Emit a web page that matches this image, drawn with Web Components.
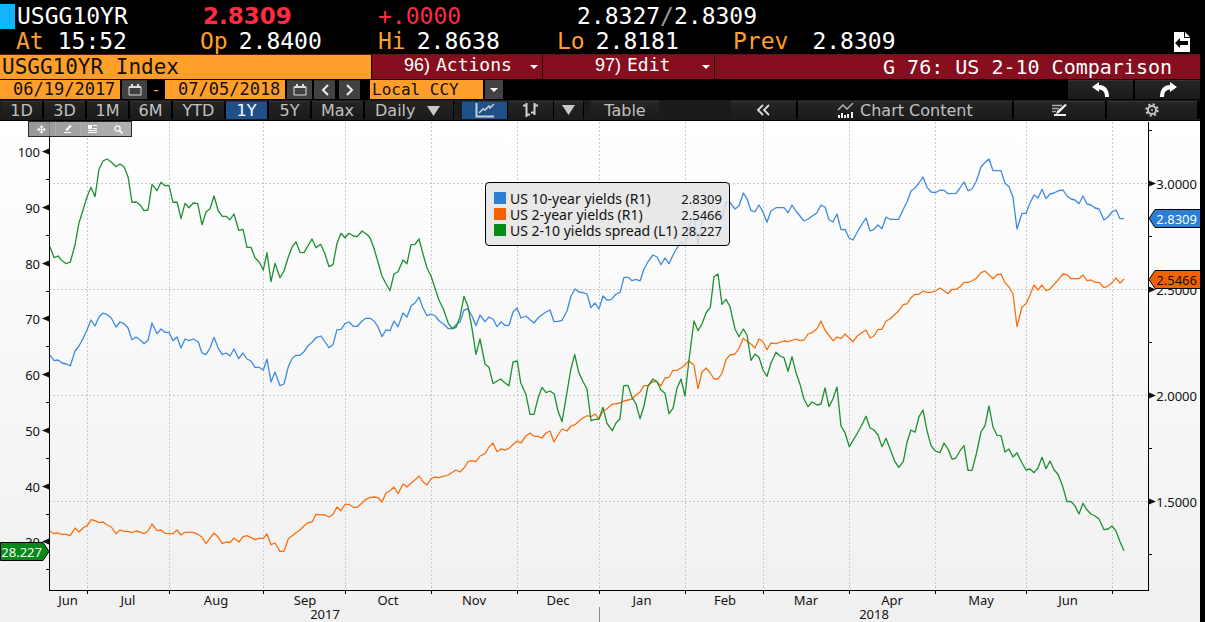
<!DOCTYPE html>
<html lang="en">
<head>
<meta charset="utf-8">
<title>USGG10YR Index - G 76: US 2-10 Comparison</title>
<style>
  body { margin: 0; background: #000; }
</style>
</head>
<body>
<terminal-page></terminal-page>

<script>
function define(name, html, setup) {
  const template = document.createElement('template');
  template.innerHTML = '<style>*{box-sizing:border-box}</style>' + html;
  customElements.define(name, class extends HTMLElement {
    constructor() {
      super();
      this.attachShadow({ mode: 'open' }).append(template.content.cloneNode(true));
    }
    connectedCallback() { if (setup) setup(this, this.shadowRoot); }
  });
}

/* ---------- icons ---------- */
const ICONS = {
  page: [16, 20, '<path d="M0 0H10V6H16V20H0Z" fill="#fff"/><path d="M11 0L16 5H11Z" fill="#fff"/><path d="M1 11L6 6V9H14V13H6V16Z" fill="#000"/>'],
  calendar: [14, 12, '<path d="M1 3H13V11H1Z" fill="none" stroke="#ddd"/><path d="M1 2H13V4H1Z" fill="#ddd"/><path d="M3 0H5V3H3ZM9 0H11V3H9Z" fill="#ddd"/>'],
  left: [8, 12, '<path d="M7 1L2 6L7 11" fill="none" stroke="#eee" stroke-width="2"/>'],
  right: [8, 12, '<path d="M1 1L6 6L1 11" fill="none" stroke="#eee" stroke-width="2"/>'],
  down: [8, 4, '<path d="M0 0H8L4 4Z" fill="#fff"/>'],
  bigdown: [13, 10, '<path d="M0 0H13L6.500 10Z" fill="#c8c8c8"/>'],
  undo: [18, 15, '<path d="M0 5L7 0V3C13 3 17 7 17 15H13C13 10 11 8 7 7.500V10Z" fill="#fff"/>'],
  redo: [18, 15, '<path d="M18 5L11 0V3C5 3 1 7 1 15H5C5 10 7 8 11 7.500V10Z" fill="#fff"/>'],
  line: [20, 15, '<path d="M1.500 0V13.500H19" fill="none" stroke="#c8d0dc" stroke-width="2"/><path d="M4 10L8 6L10 7L14 3L15 5L19 1" fill="none" stroke="#c8d0dc" stroke-width="1.500"/>'],
  bars: [17, 14, '<path d="M4.500 0V14M1 2.500H4M5 11.500H8M12.500 0V12M9 9.500H12M13 2.500H16" fill="none" stroke="#d4d4d4" stroke-width="2"/>'],
  collapse: [14, 12, '<path d="M7 1L2 6L7 11M13 1L8 6L13 11" fill="none" stroke="#ddd" stroke-width="1.800"/>'],
  content: [17, 15, '<path d="M1 7L6 2L10 6L16 0" fill="none" stroke="#bbb" stroke-width="1.300"/><path d="M1 12H3V15H1ZM4 10H6V15H4ZM7 12H9V15H7ZM10 11H12V15H10ZM14 9H16V15H14Z" fill="#eee"/>'],
  edit: [16, 12, '<path d="M1 1.500H11M1 4.500H8M1 7.500H5" stroke="#aaa" stroke-width="1.500"/><path d="M14 0L16 1L8 9L5 10L6 7Z" fill="#eee"/><path d="M3 11H15" stroke="#eee" stroke-width="2"/>'],
  gear: [14, 14, '<circle cx="7" cy="7" r="4" fill="none" stroke="#c4c4c4" stroke-width="2"/><circle cx="7" cy="7" r="5.700" fill="none" stroke="#c4c4c4" stroke-width="2" stroke-dasharray="2.200 2.270"/><circle cx="7" cy="7" r="1" fill="#c4c4c4"/>'],
  move: [9, 9, '<path d="M4.500 0L6.500 2.500H2.500ZM4.500 9L6.500 6.500H2.500ZM0 4.500L2.500 2.500V6.500ZM9 4.500L6.500 2.500V6.500Z" fill="#fff"/><path d="M4.500 1V8M1 4.500H8" stroke="#fff"/>'],
  pencil: [9, 8, '<path d="M8 0.500L3 5.500" stroke="#fff" stroke-width="2"/><path d="M1 7.500H8" stroke="#fff"/>'],
  note: [9, 8, '<path d="M0 0H4V4H0Z" fill="#fff"/><path d="M5 0.500H9M5 3.500H9M0 5.500H9M0 7.500H9" stroke="#fff"/>'],
  search: [9, 9, '<circle cx="3.500" cy="3.500" r="2.700" fill="none" stroke="#fff" stroke-width="1.300"/><path d="M5.500 5.500L8.500 8.500" stroke="#fff" stroke-width="1.700"/>']
};

define('ui-icon', '<style>:host{display:inline-flex;flex:none}svg{display:block}</style><svg aria-hidden="true"></svg>', (el, root) => {
  const [w, h, body] = ICONS[el.getAttribute('name')];
  const svg = root.querySelector('svg');
  svg.setAttribute('viewBox', `0 0 ${w} ${h}`);
  svg.setAttribute('width', w);
  svg.setAttribute('height', h);
  svg.innerHTML = body;
});

/* ---------- quote header ---------- */
define('quote-header', `
<style>
  :host { display: block; padding-top: 4px; color: #fff; font: 23px/25px "DejaVu Sans Mono", monospace; }
  .row { display: grid; grid-template-columns: 200fr 178fr 179fr 176fr 467fr; height: 25px; white-space: nowrap; }
  .row > * { display: flex; gap: 11px; align-items: center; min-width: 0; }
  .name::before { content: ""; width: 15px; height: 25px; background: #12b4ff; }
  .name.name { gap: 2px; }
  .price { font: bold 23px/25px "DejaVu Sans", sans-serif; padding-left: 3px; color: #ff2b45; }
  .change { color: #ff2b45; }
  .quote { padding-left: 20px; }
  .quote.quote { gap: 0; }
  .quote i { font-style: normal; color: #999; }
  dl { margin: 0; }
  dt { color: #ff9f2a; }
  dd { margin: 0; }
  .time.time { padding-left: 16px; gap: 14px; }
  .prev.prev { gap: 24px; padding-right: 10px; }
  .prev span:first-child { color: #ff9f2a; }
  ui-icon { margin-left: auto; }
</style>
<div class="row">
  <span class="name">USGG10YR</span><span class="price">2.8309</span><span class="change">+.0000</span><span class="quote">2.8327<i>/</i>2.8309</span>
</div>
<div class="row">
  <dl class="time"><dt>At</dt><dd>15:52</dd></dl>
  <dl><dt>Op</dt><dd>2.8400</dd></dl>
  <dl><dt>Hi</dt><dd>2.8638</dd></dl>
  <dl><dt>Lo</dt><dd>2.8181</dd></dl>
  <div class="prev"><span>Prev</span><span>2.8309</span><ui-icon name="page"></ui-icon></div>
</div>`);

/* ---------- command bar ---------- */
define('menu-button', `
<style>
  :host { display: flex; }
  button { flex: 1; display: flex; align-items: center; padding: 0 4px 4px 32px; border: 0; border-right: 1px solid #2a0308; background: none; color: #fff; font: 18px/20px "DejaVu Sans Mono", monospace; white-space: nowrap; }
  .num { font: 18px/20px "Liberation Sans Narrow", "Liberation Sans", sans-serif; margin-right: 6px; }
  ui-icon { margin-left: auto; padding-top: 4px; }
</style>
<button type="button" aria-haspopup="menu"><span class="num"><slot name="num"></slot></span><slot></slot><ui-icon name="down"></ui-icon></button>`);

define('command-bar', `
<style>
  :host { display: grid; grid-template-columns: 372fr 171fr 172fr 485fr; height: 26px; border-bottom: 1px solid #000; background: #860e1e; border-top: 1px solid #5a1a14; }
  input { width: 100%; min-width: 0; height: 24px; padding: 0 2px; border: 0; border-right: 1px solid #000; border-radius: 0; outline: 0; background: #ff9f2a; color: #111; font: 21px/24px "DejaVu Sans Mono", monospace; }
  .edit { padding-left: 20px; }
  h1 { margin: 0; padding-right: 28px; text-align: right; color: #fff; font: 20px/24px "DejaVu Sans Mono", monospace; white-space: nowrap; }
</style>
<input aria-label="Security" value="USGG10YR Index">
<menu-button><span slot="num">96)</span>Actions</menu-button>
<menu-button class="edit"><span slot="num">97)</span>Edit</menu-button>
<h1>G 76: US 2-10 Comparison</h1>`);

/* ---------- tool button ---------- */
define('tool-button', `
<style>
  :host { display: flex; min-width: 0; --face: linear-gradient(#252525, #1b1b1b); }
  :host([active]) { --face: #1f5088; --ink: #fff; }
  :host([plain]) { --face: #424242; }
  button { flex: 1; min-width: 0; display: flex; align-items: center; justify-content: center; gap: 6px; padding: 0; border: 0; background: var(--face); box-shadow: inset 0 1px #343434; color: var(--ink, #c0c0c0); font: 16px/19px "DejaVu Sans", sans-serif; white-space: nowrap; }
</style>
<button type="button"><slot></slot></button>`, (el, root) => {
  const label = el.getAttribute('label');
  if (label) root.querySelector('button').setAttribute('aria-label', label);
});

/* ---------- date range bar ---------- */
define('range-bar', `
<style>
  :host { display: flex; height: 20px; gap: 2px; padding-bottom: 1px; color: #ff9f2a; }
  input, select { height: 19px; border: 0; border-radius: 0; outline: 0; margin: 0; background: #ff9f2a; color: #111; font: 17px/19px "DejaVu Sans Mono", monospace; }
  input { width: 120px; padding: 0 0 0 13px; }
  select { appearance: none; width: 113px; padding: 0 2px; font-size: 16px; }
  .cal { width: 25px; }
  .step { width: 21px; margin-right: 2px; }
  .dash { width: 14px; text-align: center; font: 16px/19px "DejaVu Sans Mono", monospace; }
  .ccy { display: flex; gap: 2px; margin-left: 6px; }
  .arrow { display: flex; width: 18px; align-items: center; justify-content: center; background: #424242; }
  .hist { display: flex; gap: 2px; margin-left: auto; }
  .hist tool-button { width: 65px; }
</style>
<input aria-label="Start date" value="06/19/2017">
<tool-button plain class="cal" label="Pick start date"><ui-icon name="calendar"></ui-icon></tool-button>
<span class="dash">-</span>
<input aria-label="End date" value="07/05/2018">
<tool-button plain class="cal" label="Pick end date"><ui-icon name="calendar"></ui-icon></tool-button>
<tool-button plain class="step" label="Earlier"><ui-icon name="left"></ui-icon></tool-button>
<tool-button plain class="step" label="Later"><ui-icon name="right"></ui-icon></tool-button>
<label class="ccy"><select aria-label="Currency"><option>Local CCY</option></select><span class="arrow"><ui-icon name="down"></ui-icon></span></label>
<div class="hist"><tool-button label="Undo"><ui-icon name="undo"></ui-icon></tool-button><tool-button label="Redo"><ui-icon name="redo"></ui-icon></tool-button></div>`);

/* ---------- chart toolbar ---------- */
define('chart-toolbar', `
<style>
  :host { display: flex; height: 21px; padding: 1px 0 1px 1px; background: #1b1b1b; border-bottom: 1px solid #000; }
  .group { display: flex; gap: 2px; background: #000; padding-right: 1px; }
  .s { width: 41px; }
  .m { width: 51px; }
  .daily { display: grid; width: 88px; background: linear-gradient(#252525, #1b1b1b); align-items: center; }
  .daily > * { grid-area: 1 / 1; }
  .daily ui-icon { justify-self: end; margin-right: 13px; pointer-events: none; }
  select { appearance: none; width: 100%; height: 19px; border: 0; outline: 0; padding: 0 0 0 10px; background: none; color: #c0c0c0; font: 16px/19px "DejaVu Sans", sans-serif; }
  .types { margin-left: 8px; gap: 1px; }
  .types tool-button { width: 45px; }
  .types .more { width: 29px; }
  .table { width: 68px; margin-left: 7px; }
  .wide { flex: 1; margin-left: 72px; padding: 0 3px 0 0; }
</style>
<div class="group">
  <tool-button class="s">1D</tool-button><tool-button class="s">3D</tool-button><tool-button class="s">1M</tool-button><tool-button class="s">6M</tool-button><tool-button class="m">YTD</tool-button><tool-button class="s" active>1Y</tool-button><tool-button class="s">5Y</tool-button><tool-button class="m">Max</tool-button>
  <div class="daily"><select aria-label="Periodicity"><option>Daily</option></select><ui-icon name="bigdown"></ui-icon></div>
</div>
<div class="group types">
  <tool-button active label="Line chart"><ui-icon name="line"></ui-icon></tool-button><tool-button label="Bar chart"><ui-icon name="bars"></ui-icon></tool-button><tool-button class="more" label="More chart types"><ui-icon name="bigdown"></ui-icon></tool-button>
</div>
<tool-button class="table">Table</tool-button>
<div class="group wide">
  <tool-button style="flex:65" label="Collapse"><ui-icon name="collapse"></ui-icon></tool-button>
  <tool-button style="flex:216"><ui-icon name="content"></ui-icon>Chart Content</tool-button>
  <tool-button style="flex:91" label="Annotate"><ui-icon name="edit"></ui-icon></tool-button>
  <tool-button style="flex:91" label="Settings"><ui-icon name="gear"></ui-icon></tool-button>
</div>`);

/* ---------- floating tools and legend ---------- */
define('float-tools', `
<style>
  :host { display: grid; grid-template-columns: repeat(4, 1fr); width: 104px; border: 1px solid #111; background: linear-gradient(90deg, #8c8c8c, #aaa); height: 16px; }
  button { padding: 0; border: 0; background: none; display: flex; align-items: center; justify-content: center; }
  button + button { box-shadow: inset 1px 0 #a4a4a4; }
</style>
<button type="button" aria-label="Move"><ui-icon name="move"></ui-icon></button><button type="button" aria-label="Draw"><ui-icon name="pencil"></ui-icon></button><button type="button" aria-label="Note"><ui-icon name="note"></ui-icon></button><button type="button" aria-label="Zoom"><ui-icon name="search"></ui-icon></button>`);

define('chart-legend', `
<style>
  :host { display: block; width: 245px; padding: 8px 7px 6px 8px; border: 1px solid #000; border-radius: 4px; background: rgba(228, 228, 228, .85); color: #111; font: 13px/16px "Noto Sans", sans-serif; }
  table { width: 100%; border-collapse: collapse; }
  th, td { padding: 0; height: 16px; font-weight: normal; text-align: left; white-space: nowrap; }
  td { text-align: right; }
  th { display: flex; gap: 4px; font-size: 14px; }
  th::before { content: ""; flex: none; width: 12px; height: 12px; margin-top: 1px; background: var(--key); }
</style>
<table>
  <tr><th scope="row" style="--key:#2b7fd4">US 10-year yields (R1)</th><td>2.8309</td></tr>
  <tr><th scope="row" style="--key:#f46200">US 2-year yields (R1)</th><td>2.5466</td></tr>
  <tr><th scope="row" style="--key:#048a16">US 2-10 yields spread (L1)</th><td>28.227</td></tr>
</table>`);

/* ---------- chart ---------- */
/* Series and gridlines use a grid of 3 units per pixel at the base size of 1200 x 501. */
const SERIES = [
  ['#3f8ae0', '150,705 162,722 174,720 186,729 199,732 211,738 225,693 237,678 250,654 262,628 273,600 285,618 297,591 309,579 321,584 334,594 348,621 360,606 372,611 384,624 396,659 408,651 420,659 432,671 444,661 456,609 471,641 483,627 495,637 507,637 519,662 531,651 543,684 555,657 567,662 580,657 595,666 606,699 618,704 630,684 642,652 655,685 667,704 678,699 690,708 702,687 716,716 729,699 741,717 753,723 765,742 777,742 790,750 801,717 813,786 825,756 840,797 852,792 865,740 877,715 888,706 900,706 912,695 924,677 936,667 948,653 963,648 975,666 987,683 999,674 1011,629 1023,628 1035,611 1047,606 1060,619 1072,619 1086,603 1098,595 1110,595 1122,603 1134,620 1146,650 1158,630 1170,632 1182,603 1194,620 1209,579 1221,591 1233,558 1245,549 1257,531 1269,564 1281,587 1294,582 1306,588 1318,603 1330,611 1345,626 1357,626 1368,614 1380,606 1392,570 1404,567 1416,588 1428,617 1440,585 1455,605 1467,591 1479,597 1491,620 1503,606 1515,616 1527,616 1539,576 1551,564 1563,594 1578,588 1590,599 1602,609 1614,594 1626,584 1638,576 1650,570 1662,605 1674,604 1686,601 1701,573 1713,528 1725,507 1737,516 1749,518 1761,522 1773,563 1785,549 1797,567 1809,528 1821,540 1834,539 1848,522 1860,518 1872,472 1884,472 1896,482 1908,478 1920,483 1932,447 1944,425 1959,405 1971,411 1983,434 1995,414 2007,431 2019,405 2031,384 2043,366 2055,375 2067,318 2082,290 2094,372 2106,300 2118,285 2131,292 2142,294 2154,278 2166,296 2178,247 2190,247 2205,267 2217,258 2230,219 2241,236 2253,272 2265,275 2277,255 2289,276 2301,307 2313,272 2328,263 2352,263 2364,278 2376,255 2388,273 2400,288 2412,303 2424,297 2451,278 2463,255 2475,261 2487,299 2499,306 2511,282 2523,329 2535,328 2547,354 2559,360 2572,336 2585,314 2598,294 2610,333 2622,328 2634,315 2646,326 2658,291 2670,298 2696,298 2710,268 2721,246 2733,213 2745,204 2757,189 2769,171 2781,202 2793,216 2806,218 2820,210 2832,211 2844,221 2868,220 2880,204 2892,186 2904,212 2916,207 2929,184 2943,141 2955,127 2967,117 2979,152 3003,152 3015,190 3027,200 3039,232 3051,327 3066,280 3078,280 3090,249 3102,225 3114,234 3126,208 3138,236 3150,222 3162,219 3176,212 3189,210 3201,228 3213,237 3225,240 3237,251 3249,228 3261,252 3273,255 3285,264 3297,267 3312,300 3324,291 3336,276 3348,270 3360,296 3372,296'],
  ['#f87010', '150,1233 162,1241 174,1239 186,1243 199,1243 211,1247 225,1224 237,1236 250,1223 262,1217 273,1199 285,1202 297,1208 309,1206 321,1215 334,1221 348,1241 360,1230 372,1234 384,1234 396,1238 408,1233 420,1236 432,1241 444,1233 456,1212 471,1232 483,1230 495,1240 519,1241 531,1230 543,1245 555,1237 580,1237 593,1243 606,1252 618,1271 630,1255 642,1239 655,1252 667,1271 678,1266 690,1268 702,1254 717,1266 729,1250 741,1247 765,1259 777,1255 790,1255 801,1242 813,1274 825,1269 840,1294 852,1294 865,1256 888,1238 900,1230 912,1218 924,1208 936,1206 948,1183 975,1185 987,1191 999,1183 1011,1161 1023,1172 1035,1153 1047,1153 1060,1162 1072,1162 1086,1149 1098,1138 1110,1133 1122,1131 1134,1133 1146,1146 1158,1119 1170,1112 1182,1101 1194,1121 1209,1092 1221,1101 1233,1090 1245,1080 1257,1068 1269,1085 1281,1095 1293,1076 1305,1071 1317,1073 1345,1065 1368,1050 1380,1056 1392,1044 1404,1025 1416,1022 1428,1025 1440,1008 1455,1001 1467,981 1479,969 1491,995 1503,987 1515,990 1527,985 1551,963 1563,969 1578,948 1590,939 1602,949 1614,949 1626,954 1638,939 1650,933 1662,966 1674,945 1686,927 1701,933 1713,918 1725,914 1745,896 1761,887 1773,890 1785,882 1797,896 1809,873 1821,866 1837,853 1860,849 1872,843 1896,837 1908,825 1920,816 1932,797 1944,797 1956,786 1968,784 1983,797 1995,774 2007,772 2019,751 2031,751 2043,744 2055,735 2067,722 2082,736 2094,806 2106,757 2118,744 2131,759 2142,777 2154,777 2166,760 2178,719 2190,705 2205,702 2217,685 2230,655 2241,664 2253,672 2265,684 2277,657 2289,665 2301,689 2313,669 2328,671 2352,663 2364,665 2388,657 2400,662 2412,660 2424,642 2436,638 2451,626 2463,603 2475,630 2499,662 2511,651 2523,656 2535,642 2559,665 2572,648 2598,630 2610,654 2622,648 2634,628 2646,628 2658,603 2670,597 2696,572 2710,553 2721,552 2733,533 2745,523 2757,523 2769,513 2781,517 2793,517 2806,513 2820,504 2844,521 2856,508 2868,508 2880,501 2892,487 2904,487 2916,483 2929,475 2943,458 2955,453 2979,476 2991,464 3003,462 3015,488 3027,501 3039,522 3051,620 3066,561 3078,551 3090,525 3102,495 3114,510 3126,495 3138,512 3150,507 3176,478 3189,462 3201,464 3213,476 3237,476 3249,465 3261,482 3273,480 3285,487 3297,487 3312,503 3324,498 3336,488 3348,474 3360,489 3372,477'],
  ['#1c9030', '150,380 162,413 174,408 186,422 199,431 211,426 225,375 237,308 250,268 262,228 273,202 285,230 297,148 309,123 321,117 334,126 348,140 360,132 372,140 384,170 396,247 408,246 420,254 432,272 444,270 456,193 471,212 483,187 495,197 507,196 519,247 531,246 543,296 555,250 567,263 580,249 593,251 606,314 618,276 630,266 642,228 655,273 667,289 678,289 690,299 702,282 716,331 729,328 741,382 753,382 765,413 778,427 790,450 801,398 813,485 825,430 840,473 852,453 865,411 877,380 888,366 900,397 912,398 936,357 948,383 962,373 975,402 987,440 999,434 1011,370 1023,340 1035,353 1047,340 1060,348 1072,350 1086,333 1100,343 1110,353 1122,385 1134,427 1146,468 1158,491 1170,512 1182,462 1194,455 1209,420 1221,431 1233,374 1245,373 1257,357 1269,402 1281,444 1294,470 1306,507 1318,543 1330,566 1345,610 1357,626 1368,622 1380,590 1392,529 1404,560 1416,625 1428,703 1440,657 1455,732 1467,742 1479,791 1490,784 1502,777 1514,788 1527,797 1539,726 1552,723 1562,788 1578,824 1590,883 1602,883 1614,835 1626,802 1638,818 1650,813 1663,822 1673,870 1686,905 1698,835 1712,750 1724,703 1736,757 1748,783 1761,807 1773,902 1785,898 1797,897 1809,862 1821,910 1837,932 1848,909 1860,896 1871,797 1884,796 1896,832 1908,852 1920,896 1932,858 1944,798 1959,777 1971,785 1983,810 1995,820 2007,881 2019,865 2031,805 2043,777 2055,828 2067,719 2082,603 2094,632 2106,612 2118,579 2131,562 2142,470 2154,462 2166,553 2178,538 2190,560 2205,627 2217,650 2230,627 2241,645 2253,721 2265,702 2277,712 2289,750 2301,769 2313,729 2328,697 2340,708 2352,713 2364,754 2376,710 2388,758 2400,793 2412,837 2424,860 2436,846 2451,855 2463,852 2475,804 2487,860 2499,836 2511,801 2523,918 2535,938 2548,980 2560,960 2572,940 2585,916 2598,889 2610,923 2622,930 2634,945 2646,980 2658,955 2670,986 2683,1021 2696,1042 2710,1025 2721,967 2733,930 2745,937 2757,890 2769,870 2781,932 2793,977 2806,993 2820,998 2832,969 2844,987 2856,1017 2867,1015 2880,992 2892,977 2904,1051 2916,1051 2929,1002 2943,936 2955,917 2967,858 2979,921 2991,946 3003,947 3015,996 3027,987 3039,1011 3051,998 3064,1025 3078,1050 3090,1047 3102,1058 3114,1044 3126,1012 3138,1046 3150,1023 3162,1049 3174,1063 3188,1099 3201,1145 3213,1144 3225,1158 3237,1182 3249,1150 3261,1170 3273,1182 3285,1188 3297,1197 3312,1229 3324,1227 3336,1218 3348,1233 3360,1265 3372,1292']
];
const MONTH_STARTS = [87, 169, 263, 345, 431, 517, 599, 685, 763, 849, 935, 1026, 1112];
const MONTHS = [['Jun', 68], ['Jul', 128], ['Aug', 216], ['Sep', 305], ['Oct', 388], ['Nov', 474], ['Dec', 558], ['Jan', 642], ['Feb', 725], ['Mar', 806], ['Apr', 892], ['May', 981], ['Jun', 1068]];

define('yield-chart', `
<style>
  :host { display: block; position: relative; min-height: 300px; overflow: hidden; background: linear-gradient(#fff, #f0f0f0); }
  svg { position: absolute; inset: 0; width: 100%; height: 100%; display: block; font: 13px "Noto Sans", sans-serif; fill: #111; }
  float-tools { position: absolute; left: 28px; top: 0; opacity: .9; }
  chart-legend { position: absolute; left: 485px; top: 61px; }
</style>
<svg role="img" aria-label="US 10-year and 2-year yields with 2-10 spread"></svg>
<float-tools></float-tools>
<chart-legend></chart-legend>`, (el, root) => {
  const svg = root.querySelector('svg');
  const draw = () => {
    const w = el.clientWidth, h = el.clientHeight;
    const left = 49, right = w - 52, bottom = h - 32;
    const sx = (right - left) / 1099, sy = bottom / 469;
    const px = x => left + (x - 49) * sx;
    const py = y => y * sy;
    const cx = x => Math.round(px(x)) + .5;
    const cy = y => Math.round(py(y)) + .5;
    let s = '';
    const line = (x1, y1, x2, y2, extra = 'stroke="#000"') => { s += `<path d="M${x1} ${y1}L${x2} ${y2}" fill="none" ${extra}/>`; };
    const dash = 'stroke="#c6c8d2" stroke-dasharray="2 2"';
    const text = (x, y, t, anchor = 'middle', fill = '#111') => { s += `<text x="${x}" y="${y}" text-anchor="${anchor}" fill="${fill}">${t}</text>`; };
    for (const x of MONTH_STARTS) {
      line(cx(x), 1, cx(x), bottom, dash);
      line(cx(x), bottom, cx(x), bottom + 4);
    }
    for (const y of [62, 168, 274, 380]) line(left, cy(y), right, cy(y), dash);
    for (const [color, pts] of SERIES) {
      const p = pts.split(' ').map(q => { const [x, y] = q.split(',').map(Number); return px(x / 3).toFixed(1) + ',' + py(y / 3 - 1).toFixed(1); });
      s += `<polyline points="${p.join(' ')}" fill="none" stroke="${color}" stroke-width="1.3" stroke-linejoin="round"/>`;
    }
    line(left + .5, 1, left + .5, bottom + 1);
    line(right + .5, 1, right + .5, bottom + 1);
    line(left, bottom + .5, right + 1, bottom + .5);
    for (let i = 0; i < 8; i++) {
      const y = cy(30 + i * 55.75), m = cy(58 + i * 55.75);
      s += `<path d="M42 ${y}L49 ${y - 3}V${y + 3}Z"/>`;
      text(40, y + 5, 100 - i * 10, 'end');
      line(46, m, left, m);
    }
    line(46, 2.5, left, 2.5);
    ['3.0000', '2.5000', '2.0000', '1.5000'].forEach((t, i) => {
      const y = cy(62 + i * 106);
      s += `<path d="M${right + 8} ${y}L${right + 1} ${y - 3}V${y + 3}Z"/>`;
      text(w - 3, y + 5, t, 'end');
    });
    for (let i = 0; i < 5; i++) line(right + 1, cy(9 + i * 106), right + 4, cy(9 + i * 106));
    const tag = (y, t, bg, ink) => {
      s += `<path d="M${right + 1} ${y}L${right + 7} ${y - 9}H${w + 1}V${y + 9}H${right + 7}Z" fill="${bg}" stroke="#000"/>`;
      text(w - 3, y + 5, t, 'end', ink);
    };
    tag(cy(97), '2.8309', '#2b7fd4', '#fff');
    tag(cy(158), '2.5466', '#f46200', '#111');
    const g = cy(430);
    s += `<path d="M.5 ${g - 9}H43L49 ${g}L43 ${g + 9}H.5Z" fill="#048a16" stroke="#000"/>`;
    text(42, g + 5, '28.227', 'end', '#fff');
    for (const [t, x] of MONTHS) text(px(x), h - 17, t);
    text(px(325), h - 3, '2017');
    text(px(874), h - 3, '2018');
    line(cx(599), h - 15, cx(599), h, 'stroke="#888"');
    svg.innerHTML = s;
  };
  draw();
  new ResizeObserver(draw).observe(el);
});

define('terminal-page', `
<style>
  :host { display: flex; flex-direction: column; min-height: 100vh; box-sizing: border-box; padding-right: 5px; background: #000; }
  yield-chart { flex: 1; }
</style>
<quote-header></quote-header>
<command-bar></command-bar>
<range-bar></range-bar>
<chart-toolbar></chart-toolbar>
<yield-chart></yield-chart>`);
</script>
</body>
</html>
